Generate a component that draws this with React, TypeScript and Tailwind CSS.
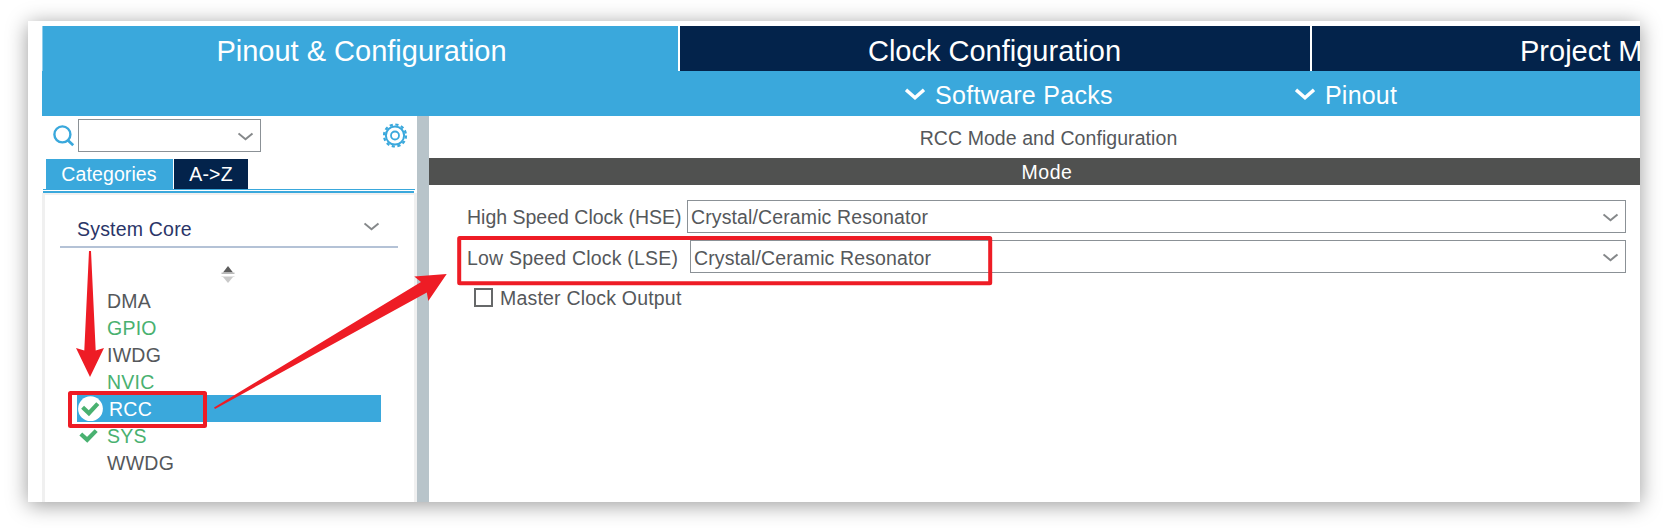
import React from "react";

const categories = [
  { name: "DMA", tone: "text-[#55585b]" },
  { name: "GPIO", tone: "text-[#49b170]" },
  { name: "IWDG", tone: "text-[#55585b]" },
  { name: "NVIC", tone: "text-[#49b170]" },
  { name: "RCC", tone: "text-white", selected: true },
  { name: "SYS", tone: "text-[#49b170]", checked: true },
  { name: "WWDG", tone: "text-[#55585b]" },
];

function Chevron() {
  return (
    <svg width="16" height="9" viewBox="0 0 16 9" fill="none" className="shrink-0">
      <path d="M0.5 1.4L7.5 7.2L14.5 1.4" stroke="#85888a" strokeWidth="2" />
    </svg>
  );
}

function MenuChevron() {
  return (
    <svg width="20" height="13" viewBox="0 0 20 13" fill="none" className="mt-[2px] shrink-0">
      <path d="M1 1.8L10 9.8L19 1.8" stroke="#fff" strokeWidth="3.4" />
    </svg>
  );
}

function SearchIcon() {
  return (
    <svg width="22" height="22" viewBox="0 0 22 22" fill="none">
      <circle cx="9.4" cy="9.4" r="8" stroke="#3aa8dc" strokeWidth="2.4" />
      <path d="M14.6 15L20.2 20.2" stroke="#3aa8dc" strokeWidth="2.8" />
    </svg>
  );
}

function GearIcon() {
  return (
    <svg width="25" height="25" viewBox="0 0 25 25" fill="none" stroke="#3aa8dc">
      <circle cx="12" cy="12.5" r="11" strokeWidth="2.2" strokeDasharray="3.2 2.56" />
      <circle cx="12" cy="12.5" r="9.1" strokeWidth="2" />
      <circle cx="12" cy="12.5" r="4" strokeWidth="1.8" />
    </svg>
  );
}

function Check({ selected }: { selected?: boolean }) {
  return (
    <svg width="26" height="27" viewBox="0 0 26 27" fill="none">
      {selected && <circle cx="13.5" cy="13.7" r="12.4" fill="#fff" />}
      <path
        d={selected ? "M5.6 12.2L11.9 18.2L20.8 8.6" : "M3.8 12L10.2 17.8L19.2 8.6"}
        stroke="#49b170"
        strokeWidth="4.2"
      />
    </svg>
  );
}

function Combo({ className, textClass }: { className: string; textClass: string }) {
  return (
    <div className={`flex h-[33px] items-center justify-between border border-[#8b9196] pr-[6px] ${className}`}>
      <span className={`leading-[31px] tracking-[0.12px] ${textClass}`}>Crystal/Ceramic Resonator</span>
      <span className="pt-[2px]">
        <Chevron />
      </span>
    </div>
  );
}

export default function App() {
  return (
    <div className="relative h-[528px] w-[1663px] overflow-hidden bg-white pl-[28px] pt-[21px] font-['Liberation_Sans',Arial,sans-serif] text-[19.5px] text-[#55585b]">
      <div className="flex h-[481px] w-[1612px] flex-col overflow-hidden bg-white pl-[14px] pt-[5px] shadow-[0_3px_20px_rgba(0,0,0,0.4)]">
        <nav className="flex h-[45px] shrink-0 bg-[#03234b] text-[29px] leading-[50px] text-white">
          <div className="w-[636px] shrink-0 border-l border-[#8fcdeb] bg-[#3aa8dc] pl-[2px] text-center">
            Pinout &amp; Configuration
          </div>
          <div className="w-[632px] shrink-0 border-l-2 border-white pr-px text-center">
            Clock Configuration
          </div>
          <div className="shrink-0 border-l-2 border-white pl-[208px] whitespace-nowrap">
            Project Manager
          </div>
        </nav>
        <div className="flex h-[45px] shrink-0 items-center bg-[#3aa8dc] pl-[863px] text-[25px] leading-[45px] text-white">
          <MenuChevron />
          <span className="w-[359px] pl-[10px] pt-[3px] tracking-[0.3px]">Software Packs</span>
          <span className="w-[11px]" />
          <MenuChevron />
          <span className="pl-[10px] pt-[3px] tracking-[0.2px]">Pinout</span>
        </div>
        <div className="flex min-h-0 flex-1">
          <aside className="flex w-[375px] shrink-0 flex-col">
            <div className="flex h-[43px] items-start pl-[11px] pt-[3px]">
              <div className="w-[25px] pt-[6px]">
                <SearchIcon />
              </div>
              <div className="flex h-[33px] w-[183px] items-center justify-end border border-[#8b9196] pr-[6px] pt-[2px]">
                <Chevron />
              </div>
              <div className="pl-[122px] pt-[4px]">
                <GearIcon />
              </div>
            </div>
            <div className="flex h-[30px] gap-px pl-[4px] leading-[30px] text-white">
              <div className="w-[127px] bg-[#3aa8dc] pr-px text-center tracking-[0.1px]">Categories</div>
              <div className="w-[74px] bg-[#03234b] text-center tracking-[0.2px]">A-&gt;Z</div>
            </div>
            <div className="ml-px h-px w-[372px] bg-[#3aa8dc]" />
            <div className="ml-px mt-px h-[2px] w-[371px] bg-[#3aa8dc]" />
            <div className="flex-1 border-x-[3px] border-t-2 border-[#f0f0f0]">
              <div className="ml-[15px] mt-[18px] flex h-[35px] w-[338px] items-center justify-between border-b-2 border-[#b4c2d6] pl-[17px] pr-[18px]">
                <span className="text-[#2a3568] tracking-[0.2px]">System Core</span>
                <span className="-mt-[7px]">
                  <Chevron />
                </span>
              </div>
              <div className="flex h-[39px] justify-center pr-[4px] pt-[18px]">
                <svg width="14" height="18" viewBox="0 0 14 18">
                  <path d="M7 0L12 6.5H2Z" fill="#5c5c5c" />
                  <path d="M0.5 6.5H13.5V8H0.5Z" fill="#b9b9b9" />
                  <path d="M0.5 10H13.5V11H0.5Z" fill="#e4e4e4" />
                  <path d="M2 11H12L7 17Z" fill="#c9c9c9" />
                </svg>
              </div>
              <div className="ml-[32px] w-[304px]">
                {categories.map((c) => (
                  <div
                    key={c.name}
                    className={`flex h-[27px] leading-[28px] tracking-[0.25px] ${c.tone} ${c.selected ? "bg-[#3aa8dc]" : ""}`}
                  >
                    <span className={c.selected ? "w-[32px]" : "w-[30px]"}>
                      {(c.selected || c.checked) && <Check selected={c.selected} />}
                    </span>
                    {c.name}
                  </div>
                ))}
              </div>
            </div>
          </aside>
          <div className="w-[12px] shrink-0 bg-[#b8c4ca]" />
          <main className="flex flex-1 flex-col">
            <h1 className="h-[42px] pl-[28px] text-center leading-[44px] tracking-[0.07px]">RCC Mode and Configuration</h1>
            <div className="h-[27px] bg-[#505150] pl-[25px] text-center leading-[28px] text-white tracking-[0.5px]">Mode</div>
            <div className="flex flex-col gap-[7px] pl-[38px] pt-[15px]">
              <div className="flex">
                <span className="h-[33px] w-[220px] leading-[35px] whitespace-nowrap">High Speed Clock (HSE)</span>
                <Combo className="w-[939px] pl-[3px]" textClass="pt-px" />
              </div>
              <div className="flex">
                <span className="h-[33px] w-[223px] leading-[37px] tracking-[0.2px] whitespace-nowrap">Low Speed Clock (LSE)</span>
                <Combo className="w-[936px] pl-[3px]" textClass="pt-[4px]" />
              </div>
            </div>
            <label className="flex items-start pl-[45px] pt-[15px]">
              <span className="h-[19px] w-[19px] border-2 border-[#666869]" />
              <span className="pl-[7px] leading-[21px] tracking-[0.2px]">Master Clock Output</span>
            </label>
          </main>
        </div>
      </div>
      <svg className="absolute left-0 top-0" width="1663" height="528" viewBox="0 0 1663 528" fill="none">
        <rect x="70" y="393" width="135" height="33" rx="0.5" stroke="#ee1c25" strokeWidth="4" strokeLinejoin="round" />
        <rect x="459.2" y="238" width="531" height="45.2" rx="0.5" stroke="#ee1c25" strokeWidth="4" strokeLinejoin="round" />
        <path d="M89 251H91L95.7 350.5L104 348L90 377L76 348L84.3 350.5Z" fill="#ee1c25" />
        <path d="M214 407.5L421 282L414.3 276.5L446.7 274L428.3 301L426.8 292.5L215 409Z" fill="#ee1c25" />
      </svg>
    </div>
  );
}
